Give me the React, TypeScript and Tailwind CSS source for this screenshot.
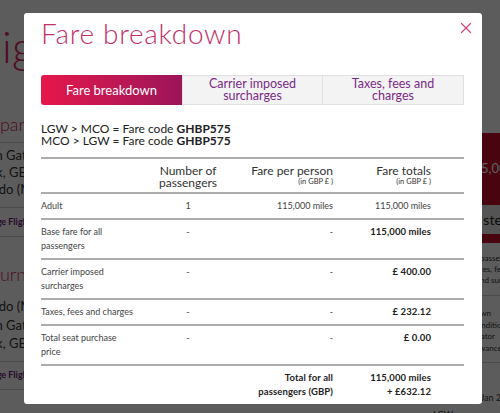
import { X } from 'lucide-react';

const rows = [
  { label: 'Adult', count: '1', perPerson: '115,000 miles', total: '115,000 miles', bold: false },
  { label: 'Base fare for all passengers', count: '-', perPerson: '-', total: '115,000 miles', bold: true },
  { label: 'Carrier imposed surcharges', count: '-', perPerson: '-', total: '£ 400.00', bold: true },
  { label: 'Taxes, fees and charges', count: '-', perPerson: '-', total: '£ 232.12', bold: true },
  { label: 'Total seat purchase price', count: '-', perPerson: '-', total: '£ 0.00', bold: true },
];

const cols = 'grid grid-cols-[100px_94px_98px_98px_1fr]';

function BackgroundPage() {
  return (
    <div className="flex h-full w-full bg-white font-['Lato',sans-serif]">
      {/* left column, mostly hidden behind the modal */}
      <div className="-ml-[32px] w-[220px] shrink-0">
        <h1 className="mt-[22px] text-[44px] font-light leading-[48px] text-[#d8245c]">Flights</h1>
        <h2 className="mt-[44px] pl-[9px] text-[18px] font-light leading-[20px] text-[#d8245c]">Depart</h2>
        <div className="mt-[8px] border-t border-[#cfcfcf]" />
        <div className="mt-[4px] text-[13px] leading-[17px] text-[#333]">
          <p className="-ml-[8px]">London Gatwick</p>
          <p className="-ml-[12px]">Gatwick, GB</p>
          <p className="-ml-[1px]">Orlando (MCO)</p>
        </div>
        <div className="mt-[9px] border-t border-[#cfcfcf]" />
        <p className="mt-[8px] pl-[8px] text-[9px] font-bold leading-[12px] text-[#6a1b7a]">Change Flight</p>
        <div className="mt-[8px] border-t border-[#cfcfcf]" />
        <h2 className="mt-[27px] pl-[6px] text-[18px] font-light leading-[20px] text-[#d8245c]">Return</h2>
        <div className="mt-[13px] text-[13px] leading-[18.5px] text-[#333]">
          <p className="-ml-[1px]">Orlando (MCO)</p>
          <p className="-ml-[8px]">London Gatwick</p>
          <p className="-ml-[12px]">Gatwick, GB</p>
        </div>
        <div className="mt-[8px] border-t border-[#cfcfcf]" />
        <p className="mt-[7px] pl-[8px] text-[9px] font-bold leading-[12px] text-[#6a1b7a]">Change Flight</p>
        <div className="mt-[8px] border-t border-[#cfcfcf]" />
      </div>

      {/* right column, summary panel */}
      <div className="ml-auto -mr-[60px] w-[130px] shrink-0">
        <div className="h-[133px]" />
        <div className="flex h-[72px] items-center bg-[#c8102e] pl-[36px] text-[13px] text-white">115,000 miles</div>
        <div className="flex h-[29px] items-center bg-[#e8e8e8] pl-[20px] text-[14px] text-[#222]">Next step</div>
        <div className="h-[9px] bg-[#c8102e]" />
        <div className="pl-[50px] pt-[10px] text-[8px] leading-[11px] text-[#333]">
          <p>passengers</p>
          <p className="-ml-[8px]">taxes, fees, and</p>
          <p className="-ml-[4px]">and surcharges</p>
        </div>
        <div className="mt-[9px] border-t border-[#cfcfcf]" />
        <div className="pl-[5px] pt-[12px] text-[8px] leading-[11.5px] text-[#333]">
          <p>Fare breakdown</p>
          <p>Terms and conditions</p>
          <p className="pl-[9px]">Fare calculator</p>
          <p>Baggage allowance</p>
        </div>
        <div className="mt-[8px] border-t border-[#cfcfcf]" />
        <p className="mt-[28px] pl-[38px] text-[9px] text-[#333]">12 Jan 2019</p>
        <div className="mt-[3px] flex items-center gap-[4px] pl-[3px] text-[9px] text-[#333]">
          <span>LGW</span>
          <span className="h-px w-[16px] bg-[#999]" />
        </div>
      </div>
    </div>
  );
}

export default function App() {
  return (
    <div className="relative h-[413px] w-[500px] overflow-hidden">
      <BackgroundPage />
      <div className="absolute inset-0 bg-black/[0.64]" />

      {/* Fare breakdown modal */}
      <div className="absolute left-[24px] top-[13px] h-[391px] w-[458px] overflow-hidden rounded-[3px] bg-white font-['Lato',sans-serif]">
        <button className="absolute right-[7px] top-[6px] text-[#d2467a]">
          <X className="h-[18px] w-[18px]" strokeWidth={1.6} />
        </button>

        <div className="pl-[17px] pr-[18px] pt-[6px]">
          <h2 className="text-[28px] font-light leading-none tracking-[0.7px] text-[#c4306b]">Fare breakdown</h2>

          <div className="mt-[28px] grid h-[30px] grid-cols-3">
            <button className="rounded-l-[3px] bg-linear-to-r from-[#e6164a] to-[#9c1458] text-[13px] leading-[13px] text-white">
              Fare breakdown
            </button>
            <button className="border border-[#e2e0e2] bg-[#f4f3f4] text-[12.5px] leading-[12px] text-[#7b2b87]">
              Carrier imposed
              <br />
              surcharges
            </button>
            <button className="border border-l-0 border-[#e2e0e2] bg-[#f4f3f4] text-[12.5px] leading-[12px] text-[#7b2b87]">
              Taxes, fees and
              <br />
              charges
            </button>
          </div>

          <div className="mt-[18px] text-[12px] leading-[12px] text-[#222]">
            <p>
              LGW &gt; MCO = Fare code <span className="font-bold">GHBP575</span>
            </p>
            <p>
              MCO &gt; LGW = Fare code <span className="font-bold">GHBP575</span>
            </p>
          </div>

          <div className="mt-[10px] border-t-2 border-[#acacac]">
            <div className={`${cols} border-b-2 border-[#acacac] pb-[3px] pt-[6px] text-[12px] leading-[12px] text-[#333]`}>
              <div />
              <div className="text-center">
                Number of
                <br />
                passengers
              </div>
              <div className="text-right">
                Fare per person
                <div className="mt-[1px] text-[7.5px] leading-[8px]">(in GBP £ )</div>
              </div>
              <div className="text-right">
                Fare totals
                <div className="mt-[1px] text-[7.5px] leading-[8px]">(in GBP £ )</div>
              </div>
              <div />
            </div>

            {rows.map((row) => (
              <div
                key={row.label}
                className={`${cols} border-b-2 border-[#acacac] py-[5px] text-[9px] leading-[14px] text-[#444]`}
              >
                <div className="pr-[6px]">{row.label}</div>
                <div className="text-center">{row.count}</div>
                <div className="text-right">{row.perPerson}</div>
                <div className={row.bold ? 'text-right text-[9.5px] font-bold tracking-[0.1px] text-[#222]' : 'text-right'}>
                  {row.total}
                </div>
                <div />
              </div>
            ))}

            <div className={`${cols} py-[5px] text-[9.5px] font-bold leading-[14px] tracking-[0.1px] text-[#222]`}>
              <div />
              <div />
              <div className="text-right">
                Total for all
                <br />
                passengers (GBP)
              </div>
              <div className="text-right">
                115,000 miles
                <br />+ £632.12
              </div>
              <div />
            </div>
          </div>
        </div>
      </div>
    </div>
  );
}
